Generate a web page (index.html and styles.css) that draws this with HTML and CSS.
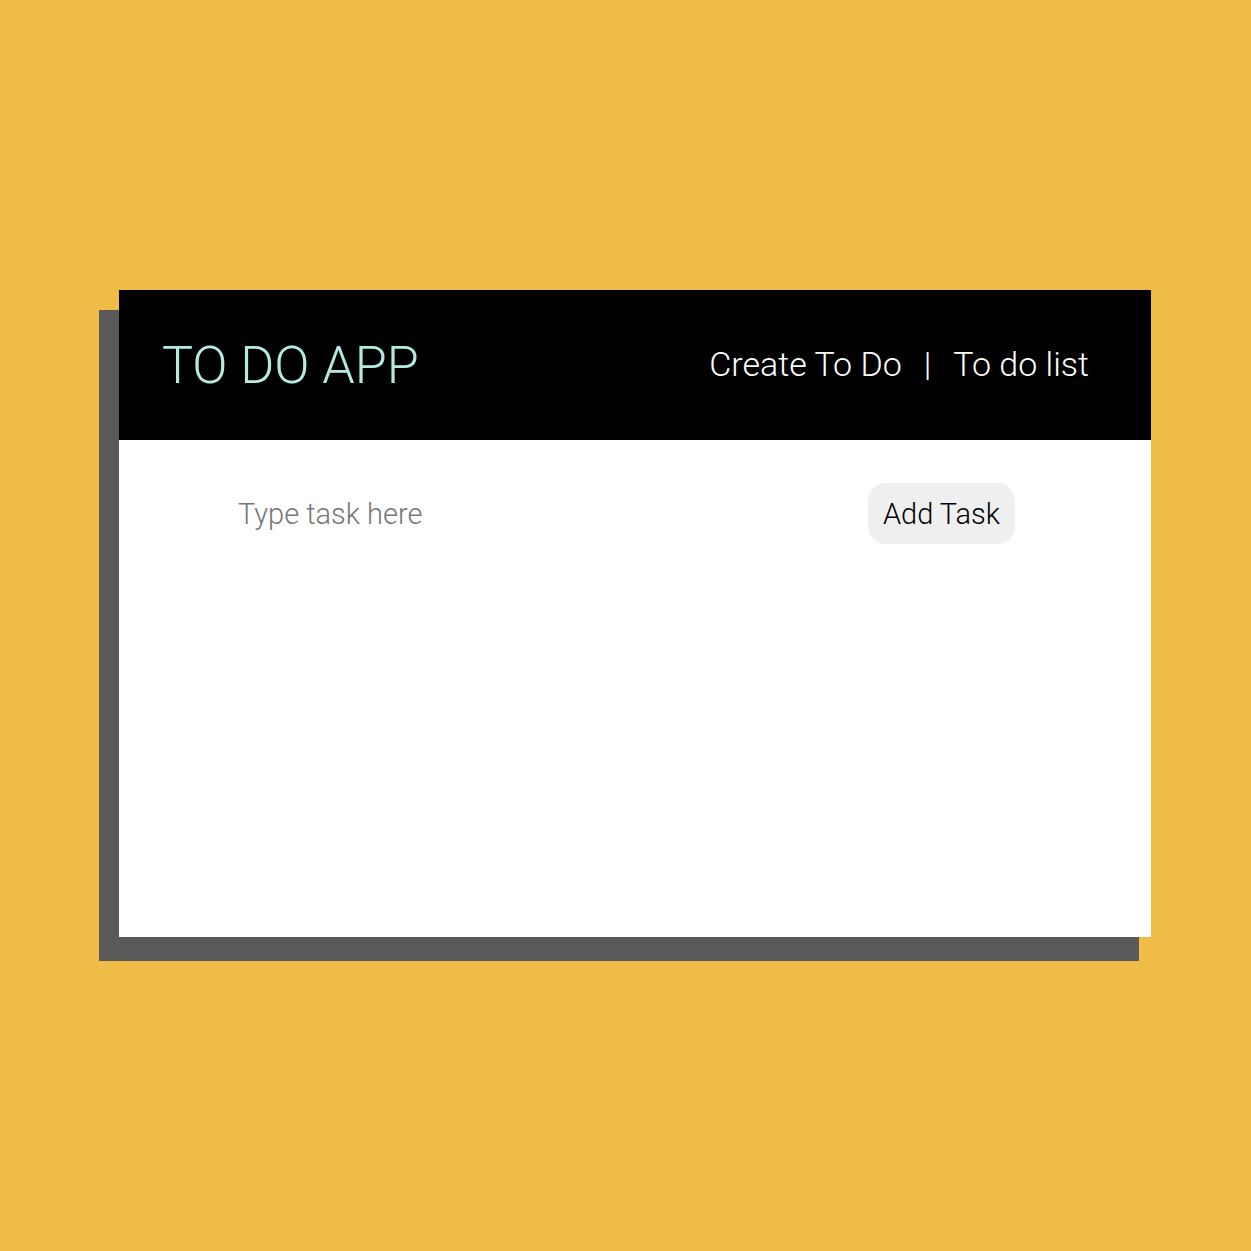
FILE: index.html
```html
<!DOCTYPE html>
<html>
<head>
<meta charset="utf-8">
<link rel="stylesheet" href="styles.css">
</head>
<body>
<div class="card">
  <header class="header">
    <h1 class="title">TO DO APP</h1>
    <nav class="nav">
      <a class="nav-link">Create To Do</a>
      <span class="sep">|</span>
      <a class="nav-link">To do list</a>
    </nav>
  </header>
  <main class="content">
    <form class="task-form">
      <input class="task-input" type="text" placeholder="Type task here">
      <button class="add-btn" type="button">Add Task</button>
    </form>
  </main>
</div>
</body>
</html>
```
FILE: styles.css
```css
html, body {
  margin: 0;
  padding: 0;
}
body {
  background: #eebc47;
  width: 1251px;
  height: 1251px;
  font-family: Roboto, "Liberation Sans", sans-serif;
  overflow: hidden;
}
.card {
  position: relative;
  z-index: 0;
  margin: 290px 0 0 119px;
  width: 1032px;
  height: 647px;
  background: #ffffff;
  display: flex;
  flex-direction: column;
}
.card::before {
  content: "";
  position: absolute;
  top: 20px;
  left: -20px;
  right: 12px;
  bottom: -24px;
  background: #595959;
  z-index: -1;
}
.header {
  height: 150px;
  background: #000000;
  display: flex;
  align-items: center;
  justify-content: space-between;
  padding: 0 62px 0 43px;
}
.title {
  margin: 0;
  font-weight: 300;
  font-size: 52px;
  color: #b3ebe2;
}
.nav {
  display: flex;
  align-items: center;
  gap: 22px;
  color: #ffffff;
  font-size: 34px;
  font-weight: 300;
  margin-top: -2px;
}
.content {
  flex: 1;
  padding: 43px 136px 0 118px;
  background: #fff;
}
.task-form {
  display: flex;
  align-items: center;
  justify-content: space-between;
}
.task-input {
  border: none;
  outline: none;
  background: transparent;
  font-family: Roboto, "Liberation Sans", sans-serif;
  font-size: 29px;
  font-weight: 300;
  color: #333;
  padding: 0 0 0 1px;
  width: 400px;
}
.task-input::placeholder {
  color: #777777;
}
.add-btn {
  border: none;
  background: #efefef;
  border-radius: 18px;
  height: 61px;
  padding: 0 15px;
  font-family: Roboto, "Liberation Sans", sans-serif;
  font-size: 29px;
  font-weight: 300;
  color: #000;
}
```
